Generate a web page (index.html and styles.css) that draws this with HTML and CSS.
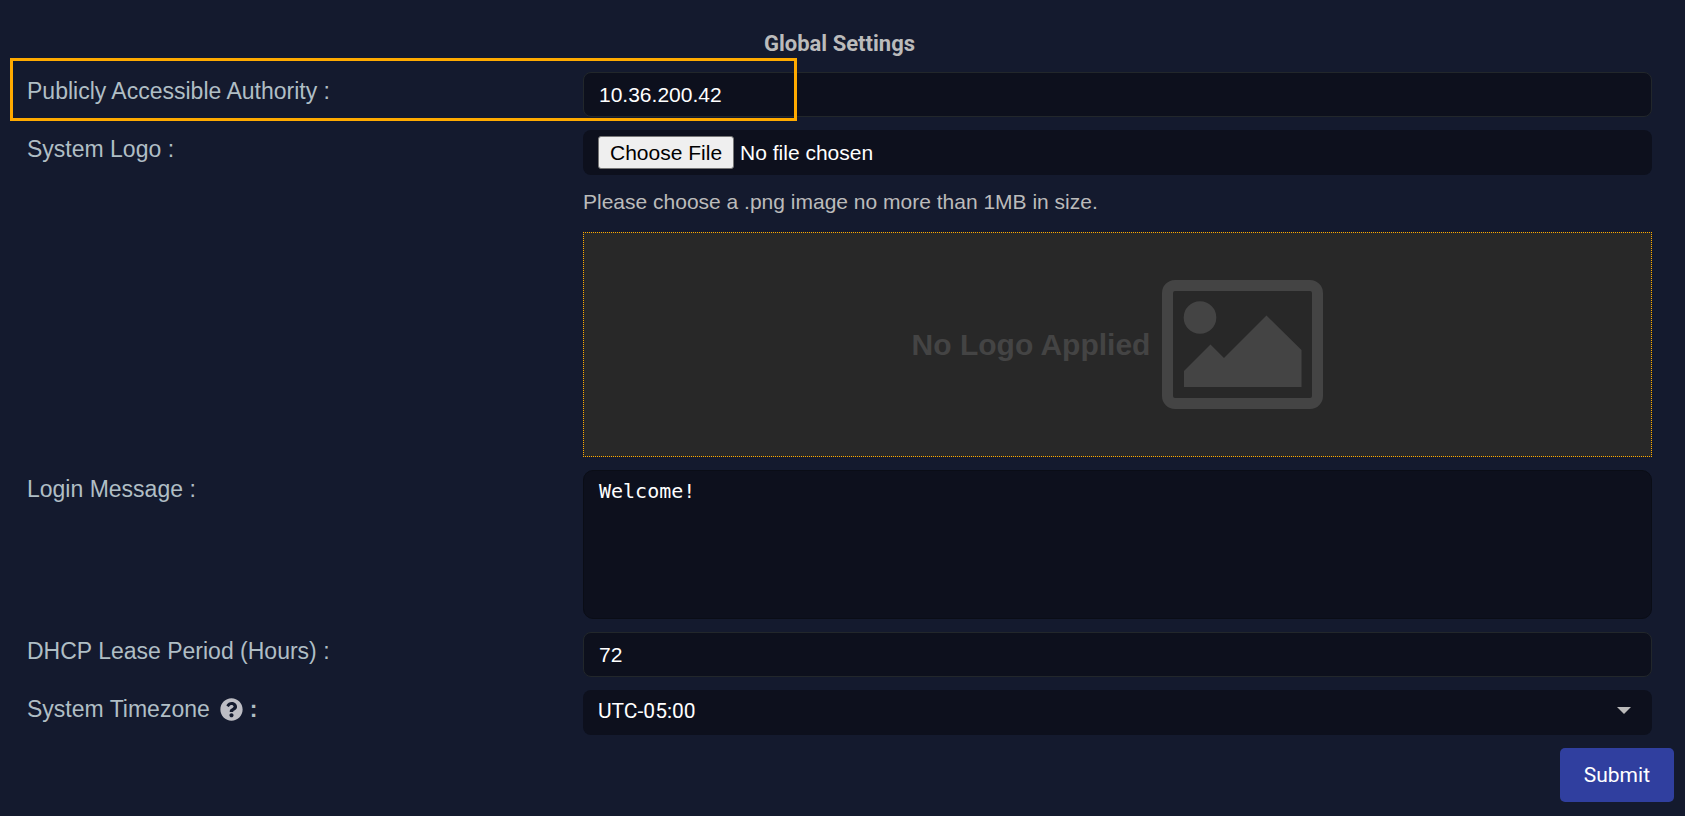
FILE: index.html
```html
<!DOCTYPE html>
<html lang="en">
<head>
<meta charset="utf-8">
<meta name="viewport" content="width=device-width, initial-scale=1">
<title>Global Settings</title>
<link rel="stylesheet" href="styles.css">
</head>
<body>
<form class="settings">
  <h1 class="title">Global Settings</h1>

  <div class="row row-highlight">
    <label class="label" for="authority">Publicly Accessible Authority :</label>
    <input class="field outlined" id="authority" type="text" value="10.36.200.42">
  </div>

  <div class="row">
    <label class="label" for="logo">System Logo :</label>
    <div class="stack">
      <input class="field file" id="logo" type="file" accept=".png">
      <p class="hint">Please choose a .png image no more than 1MB in size.</p>
      <div class="preview">
        <span>No Logo Applied</span>
        <svg class="preview-icon" viewBox="0 0 161 129" aria-hidden="true">
          <rect x="5.5" y="5.5" width="150" height="118" rx="7.5" fill="none" stroke="currentColor" stroke-width="11"/>
          <circle cx="38" cy="37.5" r="16.3" fill="currentColor"/>
          <path d="M22 91 48.500 64.500 62 78 104.500 35.500 139.500 70V107H22Z" fill="currentColor"/>
        </svg>
      </div>
    </div>
  </div>

  <div class="row">
    <label class="label" for="message">Login Message :</label>
    <textarea class="field message" id="message" spellcheck="false">Welcome!</textarea>
  </div>

  <div class="row">
    <label class="label" for="lease">DHCP Lease Period (Hours) :</label>
    <input class="field outlined" id="lease" type="text" inputmode="numeric" value="72">
  </div>

  <div class="row">
    <label class="label label-help" for="timezone">System Timezone
      <span class="help">
        <svg class="help-icon" viewBox="0 0 512 512" aria-hidden="true"><path fill="currentColor" d="M504 256c0 137-111 248-248 248S8 393 8 256 119 8 256 8s248 111 248 248zM262.700 90c-54.500 0-89.300 23-116.500 63.800-3.500 5.300-2.400 12.400 2.700 16.300l34.700 26.300c5.200 3.900 12.600 3 16.700-2.100 17.900-22.700 30.100-35.800 57.300-35.800 20.400 0 45.700 13.100 45.700 33 0 15-12.400 22.700-32.500 34C247.100 238.500 216 254.900 216 296v4c0 6.600 5.400 12 12 12h56c6.600 0 12-5.400 12-12v-1.300c0-28.500 83.200-29.600 83.200-106.700 0-58-60.200-102-116.500-102zM256 338c-25.400 0-46 20.600-46 46s20.600 46 46 46 46-20.600 46-46-20.600-46-46-46z"/></svg>
        <b>:</b>
      </span>
    </label>
    <div class="select-wrap">
      <select class="field select" id="timezone">
        <option>UTC-05:00</option>
      </select>
      <svg class="caret" viewBox="0 0 14 7" aria-hidden="true"><path d="M0 0H14L7 7Z" fill="currentColor"/></svg>
    </div>
  </div>

  <div class="actions">
    <button class="submit" type="submit">Submit</button>
  </div>
</form>
</body>
</html>
```

FILE: styles.css
```css
*,
*::before,
*::after {
  box-sizing: border-box;
}

body {
  margin: 0;
  background: #141a2e;
  color: #bbbbbb;
  font-family: "Liberation Sans", Arial, sans-serif;
  font-size: 21px;
}

.settings {
  display: flex;
  flex-direction: column;
  gap: 13px;
  padding: 29px 33px 12px 27px;
}

.title {
  margin: 0;
  font-family: Roboto, sans-serif;
  font-size: 22px;
  font-weight: 700;
  line-height: 30px;
  text-align: center;
}

.row {
  position: relative;
  display: grid;
  grid-template-columns: 556px minmax(0, 1fr);
  align-items: start;
}

.row-highlight::after {
  content: "";
  position: absolute;
  top: -14px;
  bottom: -4px;
  left: -17px;
  width: 787px;
  border: 3px solid #ffaa00;
  pointer-events: none;
}

.label {
  padding-top: 6px;
  color: #b0bec5;
  font-size: 23px;
  line-height: 26px;
}

.label-help {
  display: flex;
  align-items: center;
  gap: 10px;
}

.help {
  display: flex;
  align-items: center;
  gap: 7px;
}

.help-icon {
  width: 23px;
  height: 23px;
  color: #bdbdc4;
}

.field {
  display: block;
  width: 100%;
  height: 45px;
  margin: 0;
  padding: 0 15px;
  border: 0;
  border-radius: 8px;
  outline: 0;
  background: #0d101d;
  color: #ffffff;
  font-family: inherit;
  font-size: 21px;
}

.outlined {
  border: 1px solid #22272b;
}

.stack {
  display: flex;
  flex-direction: column;
}

.file {
  padding: 6px 15px;
}

.file::file-selector-button {
  height: 33px;
  margin: 0 6px 0 0;
  padding: 0 11px;
  border: 1px solid #767676;
  border-radius: 3px;
  background: #efefef;
  color: #000000;
  font-family: inherit;
  font-size: 21px;
}

.hint {
  margin: 14px 0 17px;
  line-height: 26px;
}

.preview {
  display: flex;
  align-items: center;
  justify-content: center;
  gap: 12px;
  height: 225px;
  border: 1px dotted #ffaa00;
  background: #282828;
  color: #444444;
  font-size: 30px;
  font-weight: 700;
}

.preview-icon {
  width: 161px;
  height: 129px;
}

.message {
  height: 149px;
  padding: 7px 15px;
  border: 1px solid #0a0d16;
  border-radius: 10px;
  font-family: "DejaVu Sans Mono", monospace;
  font-size: 20px;
  line-height: 26px;
  resize: none;
}

.select-wrap {
  position: relative;
}

.select {
  padding-bottom: 3px;
  appearance: none;
  font-family: Roboto, sans-serif;
}

.caret {
  position: absolute;
  top: 17px;
  right: 21px;
  width: 14px;
  height: 7px;
  color: #bbbbbb;
  pointer-events: none;
}

.actions {
  display: flex;
  justify-content: flex-end;
  margin-right: -22px;
}

.submit {
  height: 54px;
  padding: 0 24px;
  border: 0;
  border-radius: 5px;
  background: #303f9f;
  color: #ffffff;
  font-family: Roboto, sans-serif;
  font-size: 21px;
}
```
